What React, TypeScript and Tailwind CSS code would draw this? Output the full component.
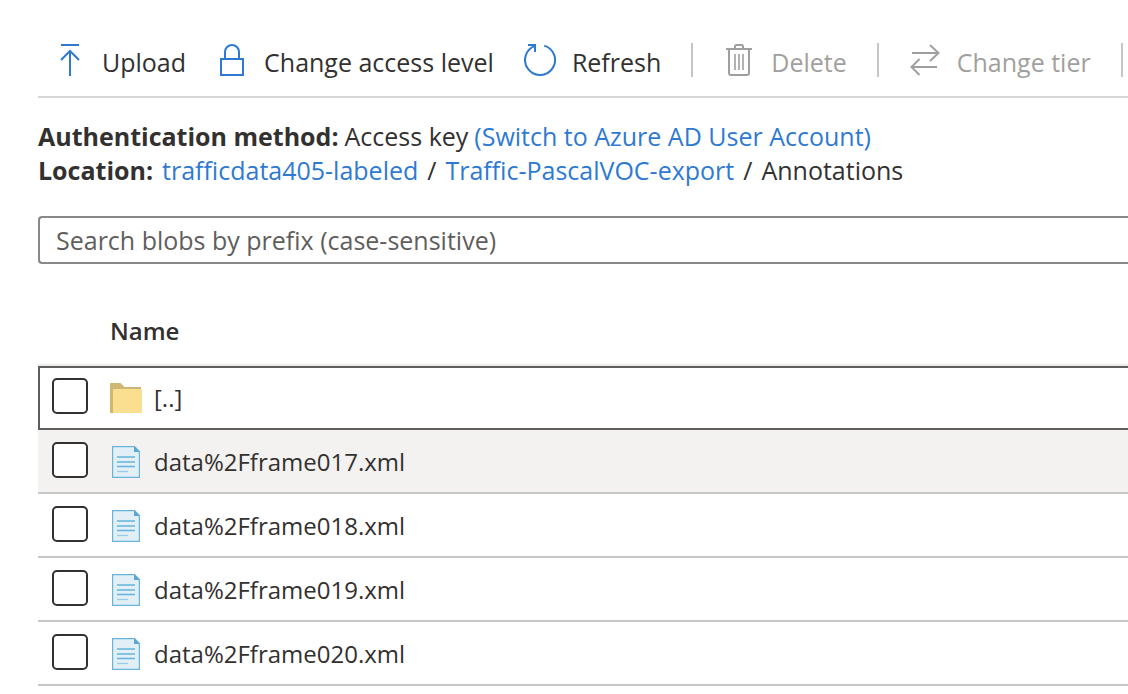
import type { ReactNode } from "react";

const files = ["data%2Fframe017.xml", "data%2Fframe018.xml", "data%2Fframe019.xml", "data%2Fframe020.xml"];

function UploadIcon() {
  return (
    <svg viewBox="0 0 32 32" className="size-8 shrink-0" fill="none" stroke="currentColor" strokeWidth="2" aria-hidden="true">
      <path d="M7 1h18M16 32V7M7 16l9-9 9 9" />
    </svg>
  );
}

function LockIcon() {
  return (
    <svg viewBox="0 0 32 32" className="size-8 shrink-0" fill="none" stroke="currentColor" strokeWidth="2" aria-hidden="true">
      <path d="M5 15h22v16H5zM9 15V8a7 7 0 0 1 14 0v7" />
    </svg>
  );
}

function RefreshIcon() {
  return (
    <svg viewBox="0 0 32 32" className="size-8 shrink-0" fill="none" stroke="currentColor" strokeWidth="2" aria-hidden="true">
      <path d="M20.200 1.600A15 15 0 1 1 11 1.900M4 1h7v7" />
    </svg>
  );
}

function TrashIcon() {
  return (
    <svg viewBox="0 0 32 32" className="size-8 shrink-0" fill="none" stroke="currentColor" strokeWidth="2" aria-hidden="true">
      <path d="M3 5h26M12 5V2.500Q12 1 13.500 1h5Q20 1 20 2.500V5M6 5v24q0 2 2 2h16q2 0 2-2V5" />
      <path d="M12 10v16M16 10v16M20 10v16" strokeWidth="1.600" />
    </svg>
  );
}

function SwapIcon() {
  return (
    <svg viewBox="0 0 32 32" className="size-8 shrink-0" fill="none" stroke="currentColor" strokeWidth="2" aria-hidden="true">
      <path d="M3 9h26M21 1l8.500 8-8.500 8M28 23H3M10.500 15L2.500 23l8 8" />
    </svg>
  );
}

function FolderIcon() {
  return (
    <svg viewBox="0 0 32 32" className="size-8 shrink-0" aria-hidden="true">
      <path d="M0 1h10.500l4 4H31v26H0z" fill="#ceb675" />
      <path d="M3 8q0-1 1-1h27q1 0 1 1v22q0 1-1 1H3z" fill="#fadf91" />
    </svg>
  );
}

function FileIcon() {
  return (
    <svg viewBox="0 0 32 32" className="size-8 shrink-0" aria-hidden="true">
      <path d="M2.600.600h22l4.800 5v25.800H2.600z" fill="#e1f0f7" stroke="#6bb3d9" strokeWidth="1.200" />
      <path d="M24 0l6 6h-6z" fill="#59a9d2" />
      <path d="M7 11h18M7 16h18M7 20.500h18" stroke="#68b1d8" strokeWidth="1.400" />
      <path d="M7 25.500h11" stroke="#9bcae3" strokeWidth="1.400" />
    </svg>
  );
}

function Command({ icon, label, disabled = false }: { icon: ReactNode; label: string; disabled?: boolean }) {
  return (
    <button type="button" disabled={disabled} className="flex shrink-0 items-start gap-4 text-[#323130] disabled:text-[#a19f9d]">
      <span className={disabled ? "pt-px text-[#a19f9d]" : "pt-px text-[#2f7ad1]"}>{icon}</span>
      <span className="pt-0.5">{label}</span>
    </button>
  );
}

function Separator() {
  return <span className="h-[34px] w-0.5 shrink-0 bg-[#c8c6c4]" />;
}

function RowCheckbox({ label }: { label: string }) {
  return (
    <input
      type="checkbox"
      aria-label={label}
      className="block size-9 appearance-none rounded-[5px] border-2 border-[#323130] bg-white checked:bg-[#2f7ad1]"
    />
  );
}

export default function App() {
  return (
    <main className="overflow-hidden bg-white pl-[38px] font-['Open_Sans',sans-serif] text-[25px] leading-[34px] text-[#323130]">
      <div role="toolbar" className="flex items-start gap-[30px] overflow-hidden border-b-2 border-[#d6d6d6] pt-[43px] pb-[17px] pl-4 whitespace-nowrap">
        <Command icon={<UploadIcon />} label="Upload" />
        <Command icon={<LockIcon />} label="Change access level" />
        <Command icon={<RefreshIcon />} label="Refresh" />
        <Separator />
        <Command icon={<TrashIcon />} label="Delete" disabled />
        <Separator />
        <Command icon={<SwapIcon />} label="Change tier" disabled />
        <Separator />
      </div>

      <section className="pt-[21px] whitespace-nowrap">
        <p className="flex gap-[6px]">
          <strong className="font-bold">Authentication method:</strong>
          <span>Access key</span>
          <a href="#switch" className="text-[#2f7ad1]">(Switch to Azure AD User Account)</a>
        </p>
        <nav className="flex gap-[9px]">
          <strong className="font-bold">Location:</strong>
          <a href="#container" className="text-[#2f7ad1]">trafficdata405-labeled</a>
          <span>/</span>
          <a href="#folder" className="text-[#2f7ad1]">Traffic-PascalVOC-export</a>
          <span>/</span>
          <span>Annotations</span>
        </nav>
      </section>

      <input
        type="search"
        aria-label="Search blobs by prefix"
        placeholder="Search blobs by prefix (case-sensitive)"
        className="mt-[29px] block h-12 w-full appearance-none rounded-l border-2 border-r-0 border-[#8a8886] px-4 placeholder:text-[#605e5c]"
      />

      <table className="mt-[34px] w-full border-separate border-spacing-0 text-left text-[24px]">
        <thead>
          <tr className="h-[68px]">
            <td className="w-[72px] border-b-2 border-[#edebe9]" />
            <th scope="col" className="border-b-2 border-[#edebe9] font-semibold">Name</th>
          </tr>
        </thead>
        <tbody>
          <tr className="h-16">
            <td className="border-y-2 border-l-2 border-[#605e5c] pb-1 pl-3">
              <RowCheckbox label="[..]" />
            </td>
            <td className="border-y-2 border-[#605e5c]">
              <a href="#parent" className="flex items-center gap-3"><FolderIcon />[..]</a>
            </td>
          </tr>
          {files.map((name) => (
            <tr key={name} className="h-16 nth-2:bg-[#f3f2f1]">
              <td className="border-b-2 border-[#c8c8c8] pb-0.5 pl-3.5">
                <RowCheckbox label={name} />
              </td>
              <td className="border-b-2 border-[#c8c8c8] pt-0.5">
                <a href={"#" + name} className="flex items-center gap-3"><FileIcon />{name}</a>
              </td>
            </tr>
          ))}
        </tbody>
      </table>
    </main>
  );
}
